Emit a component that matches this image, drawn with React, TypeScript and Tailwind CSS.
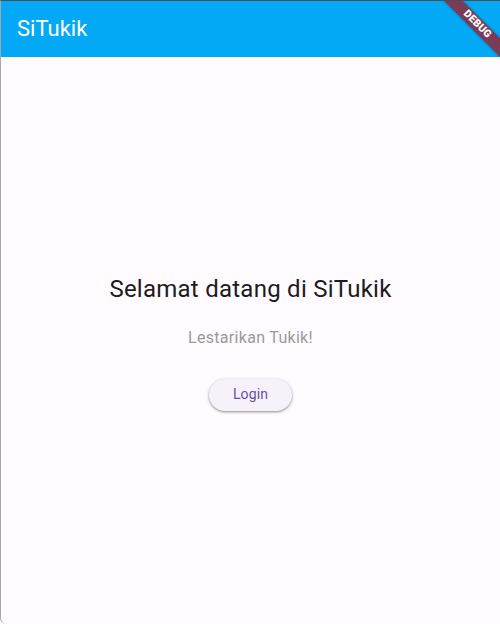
import React from "react";

function DebugBanner() {
  return (
    <div className="pointer-events-none absolute left-[426px] top-[17px] flex h-[13px] w-[100px] rotate-45 items-center justify-center bg-[#7b3a55] shadow-[0_0_3px_rgba(0,0,0,0.35)]">
      <span className="text-[10.5px] font-black leading-none tracking-[0.2px] text-white [font-family:Roboto,'Liberation_Sans',sans-serif]">
        DEBUG
      </span>
    </div>
  );
}

export default function App() {
  return (
    <div className="relative h-[624px] w-[500px] overflow-hidden rounded-bl-[6px] border-l border-t border-l-[#a6a6a6] border-t-[#4e4e4e] bg-[#fffbfe] [font-family:Roboto,'Liberation_Sans',sans-serif]">
      <div className="absolute left-[-1px] top-0 h-[70px] w-px bg-[#3c3c3c]" />
      <div className="flex h-full flex-col">
        <header className="flex h-[56px] shrink-0 items-center bg-[#03a9f4] px-4">
          <h1 className="text-[22px] leading-none text-white">SiTukik</h1>
        </header>
        <main className="flex flex-1 flex-col items-center justify-center pt-[2px]">
          <h2 className="text-[24px] leading-8 tracking-[0.25px] text-[#1d1b20]">
            Selamat datang di SiTukik
          </h2>
          <p className="mt-[21px] text-[16px] leading-6 tracking-[0.3px] text-[#9a9a9a]">
            Lestarikan Tukik!
          </p>
          <button className="mt-[29px] flex h-8 items-center rounded-full bg-[#f7f2fa] px-6 text-[14px] font-normal tracking-[0.1px] text-[#6750a4] shadow-[0_1px_2px_rgba(0,0,0,0.3),0_1px_3px_1px_rgba(0,0,0,0.12)]">
            Login
          </button>
        </main>
      </div>
      <DebugBanner />
    </div>
  );
}
